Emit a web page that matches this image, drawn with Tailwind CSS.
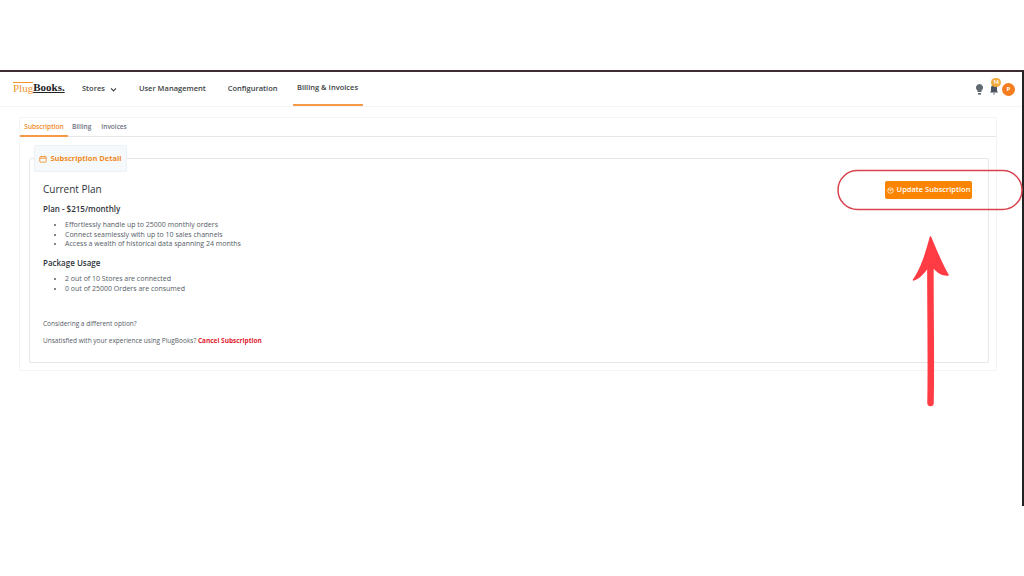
<!DOCTYPE html>
<html lang="en">
<head>
  <meta charset="UTF-8" />
  <title>Billing – PlugBooks</title>
  <script src="https://cdn.jsdelivr.net/npm/@tailwindcss/browser@4"></script>
</head>
<body class="bg-white font-['Open_Sans',sans-serif]">
  <div class="relative w-[1024px] h-[576px] overflow-hidden bg-white">
    <!-- Window frame -->
    <div class="pt-[70px]">
      <div class="h-[436px] border-t-2 border-r-2 border-t-[#3d2b30] border-r-[#222]">
        <!-- Header -->
        <div class="h-[35px] flex items-stretch border-b border-gray-100 pl-[13px] pr-[7px]">
          <div class="w-[54px] flex items-center pb-[3px] font-['Liberation_Serif',serif] text-[11px] leading-none">
            <span class="text-[#f0932b] border-t border-[#f0932b]">Plug</span><span class="text-[#222] font-bold underline">Books.</span>
          </div>
          <div class="flex items-stretch text-[7.5px] font-semibold text-[#3b3f46]">
            <div class="ml-[15px] flex items-center gap-[5px]">Stores
              <svg class="w-[7px] h-[7px]" viewBox="0 0 10 10" fill="none" stroke="#3b3f46" stroke-width="1.6"><path d="M1.5 3.5 5 7l3.5-3.5"/></svg>
            </div>
            <div class="ml-[22px] flex items-center">User Management</div>
            <div class="ml-[22px] flex items-center">Configuration</div>
            <div class="ml-[15px] w-[70px] flex items-center justify-center border-b-2 border-[#f59a45]">Billing &amp; Invoices</div>
          </div>
          <div class="ml-auto flex items-center gap-[3px] pt-[1px]">
            <svg class="w-[9px] h-[11px] mr-[2px]" viewBox="0 0 9 11" fill="#5f6b70"><path d="M4.5 0a3.5 3.5 0 0 0-2 6.4V8h4V6.4a3.5 3.5 0 0 0-2-6.4z"/><rect x="3" y="9" width="3" height="1.6"/></svg>
            <div class="relative w-[10px] h-[11px]">
              <svg class="w-[10px] h-[11px]" viewBox="0 0 10 11" fill="#4a5560"><path d="M5 1a3 3 0 0 0-3 3v3L1 8.5h8L8 7V4a3 3 0 0 0-3-3zM4 9.5h2a1 1 0 0 1-2 0z"/></svg>
              <span class="absolute -top-[6px] left-[2px] w-[10px] h-[9px] rounded-full bg-[#f2a93b] text-white text-[5px] font-bold leading-[9px] text-center">14</span>
            </div>
            <span class="w-[13px] h-[13px] rounded-full bg-[#f57c1f] text-white text-[6px] font-bold leading-[13px] text-center">P</span>
          </div>
        </div>

        <!-- Tabs card -->
        <div class="mt-[10px] ml-[19px] w-[978px] h-[254px] border border-gray-100 rounded-[2px]">
          <div class="h-[19px] flex items-stretch border-b border-gray-200 text-[6.5px] font-semibold text-[#6b7280]">
            <div class="w-[48px] flex items-center justify-center border-b-2 border-[#f59a45] -mb-px text-[#f28a1e]">Subscription</div>
            <div class="ml-[4px] flex items-center">Billing</div>
            <div class="ml-[10px] flex items-center">Invoices</div>
          </div>

          <!-- Subscription detail -->
          <div class="relative mt-[21px] ml-[9px] w-[960px] h-[205px] border border-gray-200 rounded-[2px] pl-[13px] pr-[16px] pt-[23px] flex justify-between items-start">
            <div class="absolute -top-[14px] left-[4px] w-[93px] h-[27px] bg-[#f6f9fb] border border-[#edf1f5] rounded-[2px] flex items-center justify-center gap-[3px] text-[7.5px] font-bold text-[#f28a1e]">
              <svg class="w-[8px] h-[8px]" viewBox="0 0 10 10" fill="none" stroke="#f28a1e" stroke-width="1"><rect x="1" y="2" width="8" height="7" rx="1"/><path d="M1 4h8M3 1v2M7 1v2"/></svg>
              Subscription Detail
            </div>

            <div class="text-[#3f4650]">
              <h2 class="text-[10px] leading-[14px] font-medium text-[#2f343a]">Current Plan</h2>
              <h3 class="mt-[7px] text-[8px] leading-[12px] font-semibold text-[#2f343a]">Plan - $215/monthly</h3>
              <ul class="mt-[5px] list-disc pl-[22px] text-[7px] leading-[9.7px] text-[#555c66]">
                <li>Effortlessly handle up to 25000 monthly orders</li>
                <li>Connect seamlessly with up to 10 sales channels</li>
                <li>Access a wealth of historical data spanning 24 months</li>
              </ul>
              <h3 class="mt-[8px] text-[8px] leading-[12px] font-semibold text-[#2f343a]">Package Usage</h3>
              <ul class="mt-[5px] list-disc pl-[22px] text-[7px] leading-[9.7px] text-[#555c66]">
                <li>2 out of 10 Stores are connected</li>
                <li>0 out of 25000 Orders are consumed</li>
              </ul>
              <p class="mt-[25px] text-[6.5px] leading-[9px] text-[#555c66]">Considering a different option?</p>
              <p class="mt-[8px] text-[6.5px] leading-[9px] text-[#555c66]">Unsatisfied with your experience using PlugBooks? <span class="font-bold text-[#e01b2f]">Cancel Subscription</span></p>
            </div>

            <button class="mt-[-1px] w-[87px] h-[18px] bg-[#fb8500] rounded-[2px] text-white text-[7.5px] font-semibold flex items-center justify-center gap-[3px]">
              <svg class="w-[7px] h-[7px]" viewBox="0 0 10 10" fill="none" stroke="#fff" stroke-width="1"><circle cx="5" cy="5" r="4"/><path d="M1.5 4h7M5 4v2"/></svg>
              Update Subscription
            </button>
          </div>
        </div>
      </div>
    </div>

    <!-- Annotation drawn over the screenshot -->
    <svg class="absolute left-0 top-0" width="1024" height="576" viewBox="0 0 1024 576" fill="none">
      <rect x="838" y="170.500" width="184" height="39" rx="19.500" stroke="#d9434e" stroke-width="1.500"/>
      <path d="M930.500 403C931.500 360 930 300 930.500 250" stroke="#ff3b44" stroke-width="6.500" stroke-linecap="round"/>
      <path d="M930.500 237C926 253 922 268 913.500 280C920 279 926 270 930.500 264C935 270 941 276 948 275C941 263 936 250 930.500 237Z" fill="#ff3b44" stroke="#ff3b44" stroke-width="1.500" stroke-linejoin="round"/>
    </svg>
  </div>
</body>
</html>
